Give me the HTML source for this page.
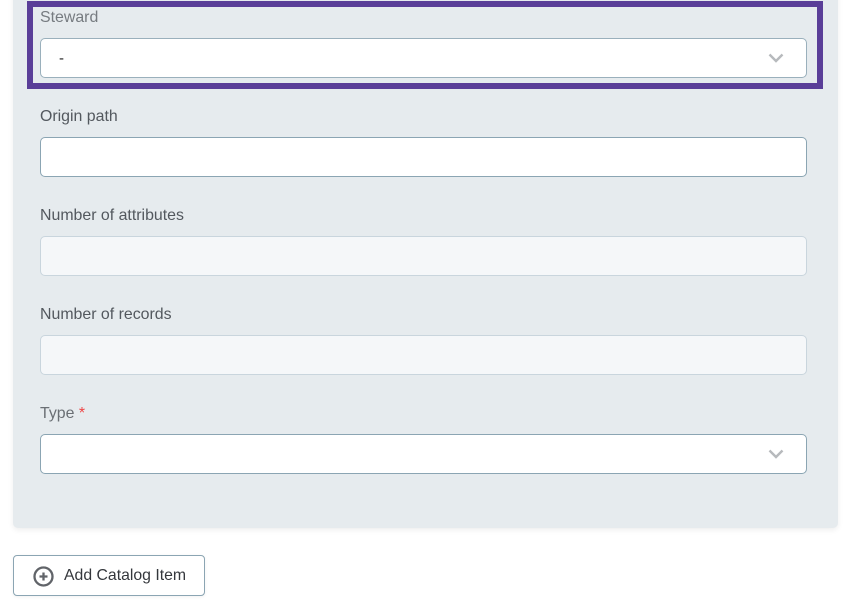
<!DOCTYPE html>
<html>
<head>
<meta charset="utf-8">
<style>
html,body{margin:0;padding:0;background:#fff;}
body{width:852px;height:612px;position:relative;overflow:hidden;font-family:"Liberation Sans",sans-serif;}
.panel{position:absolute;left:13px;top:-10px;width:825px;height:538px;background:#e6ebee;border-radius:5px;box-shadow:0 2px 6px rgba(0,0,0,.07);}
.hl{position:absolute;left:27px;top:1px;width:784px;height:76px;border:6px solid #5a3e98;}
.lbl{position:absolute;left:40px;font-size:15.9px;line-height:18px;color:#53585e;white-space:nowrap;}
.inp{position:absolute;left:40px;width:765px;height:38px;background:#fff;border:1px solid #8ba5b3;border-radius:5px;}
.dis{background:#f5f7f9;border-color:#c9d5dd;}
.chev{position:absolute;left:768px;width:16px;height:10px;}
.btn{position:absolute;left:13px;top:555px;width:190px;height:39px;border:1px solid #8ba5b3;border-radius:4px;background:#fff;box-shadow:0 1px 3px rgba(0,0,0,.06);}
.btn span{position:absolute;left:50px;top:10px;font-size:15.800px;line-height:18px;color:#34373c;white-space:nowrap;}
</style>
</head>
<body>
<div class="panel"></div>
<div class="hl"></div>

<div class="lbl" style="top:8.500px;color:#767b80;">Steward</div>
<div class="inp" style="top:38px;border-color:#9ab0bc;"></div>
<div style="position:absolute;left:59px;top:50px;font-size:15px;line-height:18px;color:#222;">-</div>
<svg class="chev" style="top:53px;" viewBox="0 0 16 10"><path d="M1.500 1.500 L8 8 L14.500 1.500" fill="none" stroke="#b7babd" stroke-width="2.400"/></svg>

<div class="lbl" style="top:108px;">Origin path</div>
<div class="inp" style="top:137px;"></div>

<div class="lbl" style="top:207px;">Number of attributes</div>
<div class="inp dis" style="top:236px;"></div>

<div class="lbl" style="top:306px;">Number of records</div>
<div class="inp dis" style="top:335px;"></div>

<div class="lbl" style="top:405px;color:#6a6f74;">Type <span style="color:#ee4444;">*</span></div>
<div class="inp" style="top:434px;"></div>
<svg class="chev" style="top:449px;" viewBox="0 0 16 10"><path d="M1.500 1.500 L8 8 L14.500 1.500" fill="none" stroke="#b7babd" stroke-width="2.400"/></svg>

<div class="btn">
<svg style="position:absolute;left:19px;top:9.500px;" width="21" height="21" viewBox="0 0 21 21"><circle cx="10.500" cy="10.500" r="9" fill="none" stroke="#616469" stroke-width="2.300"/><path d="M10.500 6.500V14.500M6.500 10.500H14.500" fill="none" stroke="#616469" stroke-width="2.300"/></svg>
<span style="top:10.500px;">Add Catalog Item</span>
</div>
</body>
</html>
